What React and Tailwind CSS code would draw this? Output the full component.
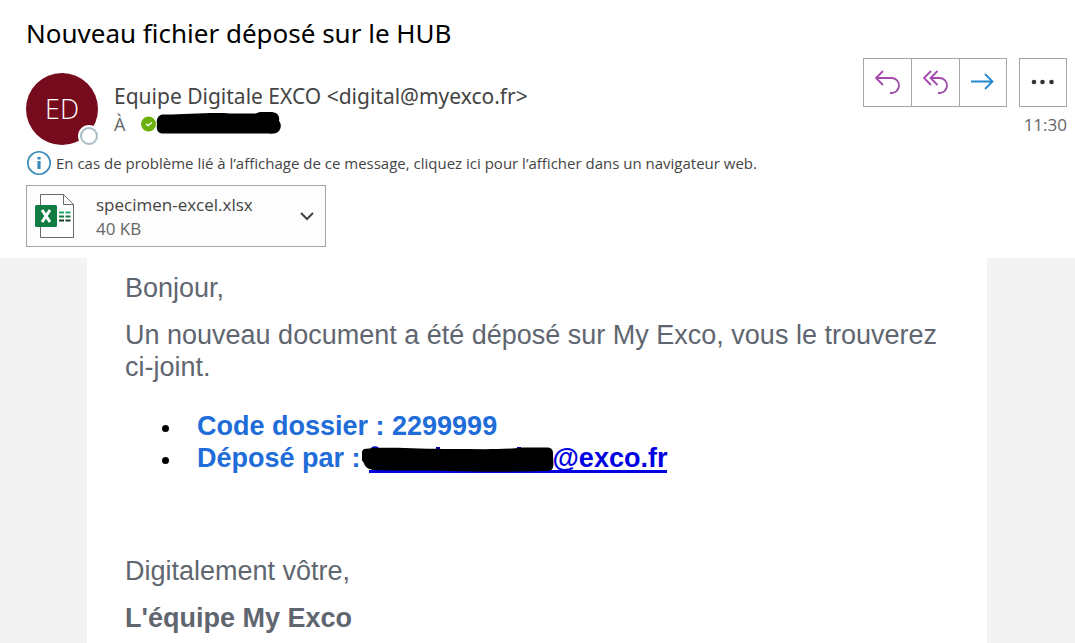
const ReplyIcon = () => (
  <svg width="26" height="26" viewBox="0 0 26 26" fill="none" stroke="#a349ab" strokeWidth="1.8">
    <path d="M8 1 1 8l7 7M1 8h15.500a7.500 7.500 0 0 1 0 15H15" />
  </svg>
);

const ReplyAllIcon = () => (
  <svg width="26" height="26" viewBox="0 0 26 26" fill="none" stroke="#a349ab" strokeWidth="1.8">
    <path d="M8 1 1 8l7 7M14.500 1l-7 7 7 7M7.500 8h9a7.500 7.500 0 0 1 0 15H15" />
  </svg>
);

const ForwardIcon = () => (
  <svg width="26" height="26" viewBox="0 0 26 26" fill="none" stroke="#2488d0" strokeWidth="1.8">
    <path d="M1 11.500h21M15 4l7.500 7.500L15 19" />
  </svg>
);

const MoreIcon = () => (
  <svg width="24" height="24" viewBox="0 0 24 24" fill="#333">
    <circle cx="3" cy="11" r="2.3" />
    <circle cx="11.5" cy="11" r="2.3" />
    <circle cx="20.5" cy="11" r="2.3" />
  </svg>
);

const InfoIcon = () => (
  <svg width="26" height="26" viewBox="0 0 26 26" fill="none">
    <circle cx="13" cy="13" r="11.2" stroke="#3a8ab8" strokeWidth="1.6" />
    <path d="M13 11v8M13 7v2.6" stroke="#3a8ab8" strokeWidth="3.2" />
  </svg>
);

const ExcelIcon = () => (
  <svg width="40" height="46" viewBox="0 0 40 46" className="shrink-0">
    <path d="M5.5 1.5h23l10 10v33h-33z" fill="#fff" stroke="#6a6a6a" />
    <path d="M28.5 1.5v10h10" fill="none" stroke="#6a6a6a" />
    <path d="M24 19.5h5M30.5 19.5h5" stroke="#21a366" strokeWidth="2" />
    <path d="M24 23.5h5M30.5 23.5h5" stroke="#107c41" strokeWidth="2" />
    <path d="M24 27.5h5M30.5 27.5h5" stroke="#14402a" strokeWidth="2" />
    <rect y="12" width="22" height="22" rx="1.5" fill="#107c41" />
    <path d="m7 17 8 12M15 17 7 29" stroke="#fff" strokeWidth="3" />
  </svg>
);

const actions = [
  { label: 'Répondre', Icon: ReplyIcon },
  { label: 'Répondre à tous', Icon: ReplyAllIcon },
  { label: 'Transférer', Icon: ForwardIcon },
];

const App = () => {
  return (
    <div className="flex min-h-screen flex-col bg-white font-['Open_Sans','Noto_Sans',sans-serif]">
      <header className="pt-3 pr-2 pb-[11px] pl-[26px]">
        <h1 className="font-['Noto_Sans',sans-serif] text-[26px] leading-[42px] text-black">Nouveau fichier déposé sur le HUB</h1>

        <div className="mt-1 flex items-start justify-between gap-4">
          <div className="flex gap-4 pt-[15px]">
            <div className="relative flex size-[72px] shrink-0 items-center justify-center rounded-full bg-[#750b1c] text-[27px] font-light text-white">
              ED
              <span className="absolute -right-[2px] -bottom-[2px] size-[22px] rounded-full bg-white p-[2px]">
                <span className="block size-[18px] rounded-full border-2 border-[#a9bcc8]" />
              </span>
            </div>
            <div className="pt-[7px]">
              <p className="font-['Noto_Sans',sans-serif] text-[21px] leading-8 text-[#444]">Equipe Digitale EXCO &lt;digital@myexco.fr&gt;</p>
              <div className="flex h-6 items-center text-lg text-[#666]">
                <span className="w-[26px]">À</span>
                <svg width="142" height="24" viewBox="0 0 142 24">
                  <circle cx="8.5" cy="12" r="7.5" fill="#6bb00a" />
                  <path d="m6 12 2 1.5 4-3" fill="none" stroke="#fff" strokeWidth="1.5" />
                  <path d="M22 2.5C40 3 70 0 90 1.5h26c4-2 9-2.5 14-1.5 7 0 10 3 9 9 3 3 2 9-1 11-2 1.5-5 2-9 1.5H23c-5 0-7-4-6-9-1-5 1-9 5-10z" />
                </svg>
              </div>
            </div>
          </div>

          <div className="flex flex-col items-end">
            <div className="flex gap-3">
              <div className="flex divide-x divide-[#a6a6a6] border border-[#a6a6a6]">
                {actions.map(({ label, Icon }) => (
                  <button key={label} type="button" aria-label={label} className="flex h-[47px] w-12 items-center justify-center last:w-[46px]">
                    <Icon />
                  </button>
                ))}
              </div>
              <button type="button" aria-label="Autres actions" className="flex w-12 items-center justify-center border border-[#a6a6a6]">
                <MoreIcon />
              </button>
            </div>
            <time className="mt-1 text-[17px] leading-7 text-[#666]">11:30</time>
          </div>
        </div>

        <button type="button" className="mt-[6px] flex h-6 items-center gap-1 text-left text-[15px] text-[#444]">
          <InfoIcon />
          En cas de problème lié à l’affichage de ce message, cliquez ici pour l’afficher dans un navigateur web.
        </button>

        <button type="button" className="mt-[10px] flex h-[62px] w-[300px] items-center border border-[#a6a6a6] bg-[#fdfdfd] pr-[10px] pl-2 text-left">
          <ExcelIcon />
          <span className="ml-[21px] grow pt-px text-[17px] leading-6">
            <span className="block text-[#444]">specimen-excel.xlsx</span>
            <span className="block text-[#666]">40 KB</span>
          </span>
          <svg width="16" height="16" viewBox="0 0 16 16" fill="none" stroke="#444" strokeWidth="2">
            <path d="m2 5 6 6 6-6" />
          </svg>
        </button>
      </header>

      <main className="grow bg-[#f3f3f3] pr-px font-['Liberation_Sans',Arial,sans-serif] text-[27px] leading-8 text-[#5f6670]">
        <article className="mx-auto min-h-[385px] max-w-[900px] bg-white px-[38px] pt-[14px] pb-2">
          <p>Bonjour,</p>
          <p className="mt-[15px]">Un nouveau document a été déposé sur My Exco, vous le trouverez ci-joint.</p>
          <ul className="mt-[27px] list-none font-bold text-[#206cd8]">
            <li className="flex items-center">
              <span className="mt-1 mr-7 ml-[37px] size-[7px] rounded-full bg-black" />
              Code dossier : 2299999
            </li>
            <li className="flex items-center">
              <span className="mt-1 mr-7 ml-[37px] size-[7px] rounded-full bg-black" />
              Déposé par :
              <a href="mailto:contact@exco.fr" aria-label="adresse @exco.fr" className="relative ml-2 pl-[184px] text-[#0000e0]">
                <span className="absolute inset-x-0 bottom-px h-[3px] bg-[#0000e0]" />
                <svg width="192" height="28" viewBox="0 0 192 28" className="absolute top-1 -left-[7px]">
                  <path d="M10 4c0-3 6-3 6 0M74 2.5h4M155 2.5h4" stroke="#0000b0" strokeWidth="3" fill="none" />
                  <path d="M12 2C40 1 60 3 90 3c25 0 50 1 70-1.500h25c4 0 6 2 6 6 0 6 1 10 0 14-1 3-4 4-10 3.500-28 1-60 1-95 0-25-1-50 0-75-1-5-1-8-3-9-7-5-5-3-12 0-14z" fill="#000" />
                </svg>
                @exco.fr
              </a>
            </li>
          </ul>
          <p className="mt-[81px]">Digitalement vôtre,</p>
          <p className="mt-[15px] font-bold">L'équipe My Exco</p>
        </article>
      </main>
    </div>
  );
};

export default App;
